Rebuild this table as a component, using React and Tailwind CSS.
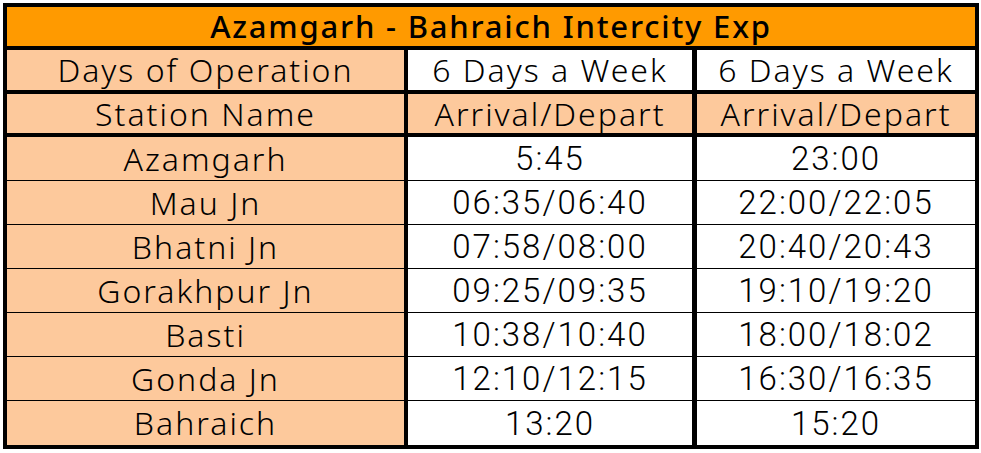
const rows = [
  ["Azamgarh", "5:45", "23:00"],
  ["Mau Jn", "06:35/06:40", "22:00/22:05"],
  ["Bhatni Jn", "07:58/08:00", "20:40/20:43"],
  ["Gorakhpur Jn", "09:25/09:35", "19:10/19:20"],
  ["Basti", "10:38/10:40", "18:00/18:02"],
  ["Gonda Jn", "12:10/12:15", "16:30/16:35"],
  ["Bahraich", "13:20", "15:20"],
]

const textFont = "font-['Noto_Sans',sans-serif] text-[32px] tracking-[2px] font-[350] leading-none text-black"
const timeFont = "font-['Roboto',sans-serif] text-[33px] tracking-[2px] font-light leading-none text-black"

function HeaderRow({ first, second, third, secondBg = "bg-white", thirdBg = "bg-white", height }) {
  return (
    <div className={`flex border-b-4 border-black ${height}`}>
      <div className={`w-[397px] flex items-center justify-center bg-[#fdc99c] ${textFont}`}>{first}</div>
      <div className={`w-[288px] border-l-4 border-black flex items-center justify-center ${secondBg} ${textFont}`}>{second}</div>
      <div className={`flex-1 border-l-[5px] border-black flex items-center justify-center ${thirdBg} ${textFont}`}>{third}</div>
    </div>
  )
}

export default function App() {
  return (
    <div className="w-[981px] h-[453px] bg-white pt-[3px] pl-[3px]">
      <div className="w-[976px] border-4 border-black">
        <div className="h-[43px] border-b-4 border-black bg-[#ff9a00] flex items-center justify-center">
          <span className="font-['Noto_Sans',sans-serif] text-[31px] tracking-[1.8px] font-medium leading-none text-black">
            Azamgarh - Bahraich Intercity Exp
          </span>
        </div>
        <HeaderRow height="h-[44px]" first="Days of Operation" second="6 Days a Week" third="6 Days a Week" />
        <HeaderRow
          height="h-[43px]"
          first="Station Name"
          second="Arrival/Depart"
          third="Arrival/Depart"
          secondBg="bg-[#fdc99c]"
          thirdBg="bg-[#fdc99c]"
        />
        {rows.map(([station, up, down], i) => (
          <div
            key={station}
            className={`flex h-[44px] ${i < rows.length - 1 ? "border-b border-black" : ""}`}
          >
            <div className={`w-[397px] bg-[#fdc99c] flex items-center justify-center ${textFont}`}>{station}</div>
            <div className={`w-[288px] border-l-4 border-black flex items-center justify-center ${timeFont}`}>{up}</div>
            <div className={`flex-1 border-l-[5px] border-black flex items-center justify-center ${timeFont}`}>{down}</div>
          </div>
        ))}
      </div>
    </div>
  )
}
